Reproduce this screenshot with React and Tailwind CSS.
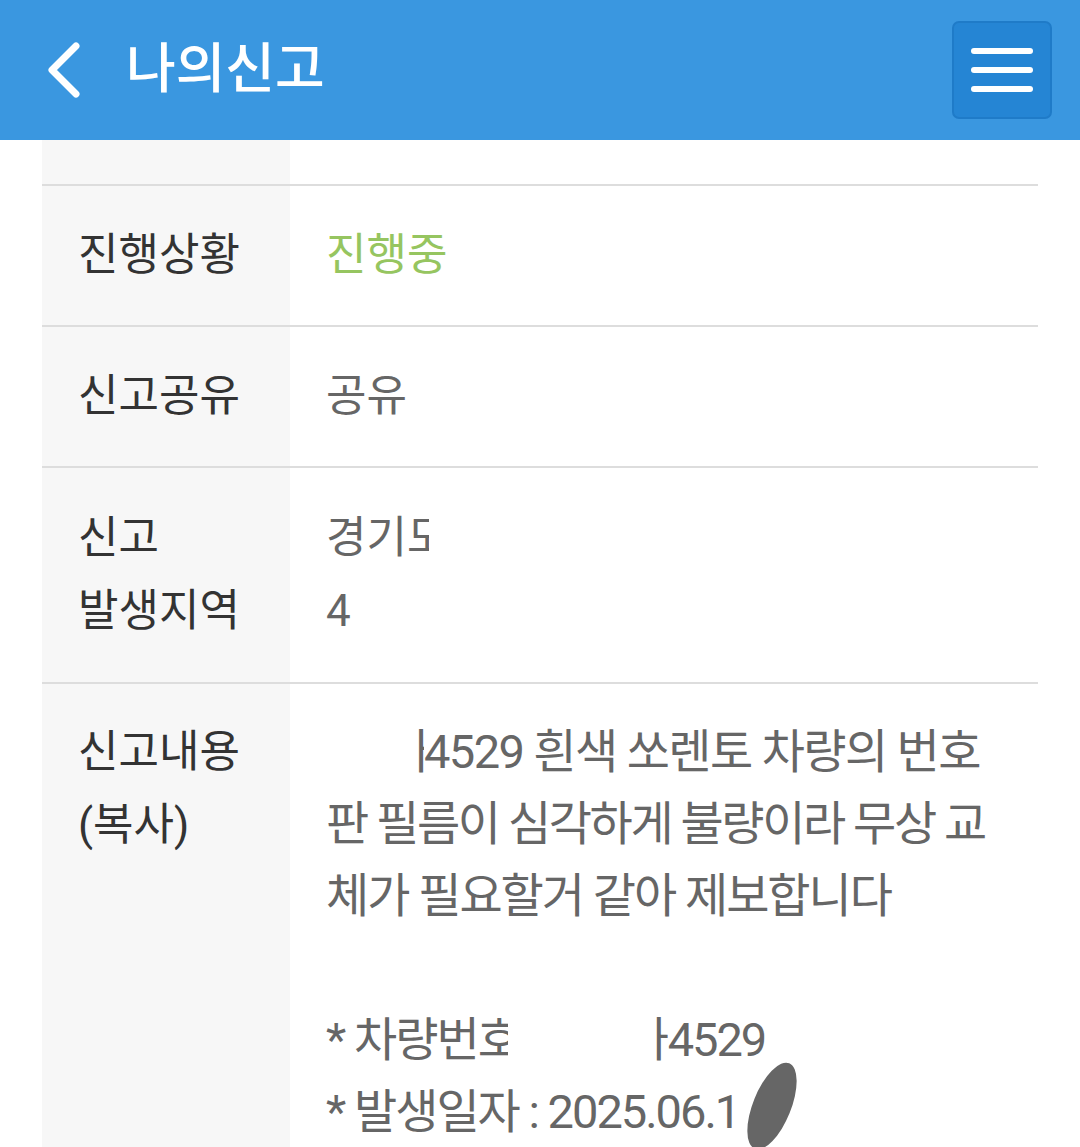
import React from "react";

const font = { fontFamily: '"Roboto", "Noto Sans CJK KR", "Noto Sans", sans-serif' };

function Row({ label, children, className = "" }) {
  return (
    <div className={`flex border-b-2 border-[#dddddd] ${className}`}>
      <div className="w-[248px] shrink-0 bg-[#f7f7f7] pl-[36px] flex flex-col justify-center text-[44px] leading-[73px] text-[#333333]">
        {label}
      </div>
      <div className="flex-1 pl-[36px] flex flex-col justify-center text-[44px] leading-[73px] text-[#666666]">
        {children}
      </div>
    </div>
  );
}

export default function App() {
  return (
    <div className="w-[1080px] h-[1147px] overflow-hidden bg-white" style={font}>
      <header className="h-[140px] bg-[#3a97e0] flex items-center justify-between pl-[44px] pr-[28px]">
        <div className="flex items-center">
          <svg width="40" height="60" viewBox="0 0 40 60" className="mr-[42px]">
            <path d="M32 6 L8 30 L32 54" fill="none" stroke="white" strokeWidth="7" strokeLinecap="round" strokeLinejoin="round" />
          </svg>
          <h1 className="text-white text-[54px] font-medium leading-none">나의신고</h1>
        </div>
        <button className="w-[100px] h-[98px] rounded-[7px] bg-[#2585d4] border-2 border-[#1f7bc8] flex flex-col items-center justify-center gap-[13px]">
          <span className="block w-[62px] h-[6px] rounded-full bg-white" />
          <span className="block w-[62px] h-[6px] rounded-full bg-white" />
          <span className="block w-[62px] h-[6px] rounded-full bg-white" />
        </button>
      </header>

      <div className="mx-[42px]">
        <Row label="" className="h-[46px]" />
        <Row label="진행상황" className="h-[141px]">
          <span className="text-[#96c560]">진행중</span>
        </Row>
        <Row label="신고공유" className="h-[141px]">
          <span>공유</span>
        </Row>
        <Row label={<><span>신고</span><span>발생지역</span></>} className="h-[216px]">
          <span className="whitespace-nowrap">
            경기
            <span className="inline-block w-[22px] overflow-hidden align-bottom">도</span>
          </span>
          <span>4</span>
        </Row>
        <div className="flex h-[520px]">
          <div className="w-[248px] shrink-0 bg-[#f7f7f7] pl-[36px] pt-[32px] text-[44px] leading-[73px] text-[#333333]">
            <div>신고내용</div>
            <div>(복사)</div>
          </div>
          <div className="flex-1 pl-[36px] pt-[32px] text-[47px] leading-[72px] text-[#666666] tracking-[-2px]">
            <div className="whitespace-nowrap tracking-[-1.6px]">
              <span className="inline-block w-[88px]" />
              <span className="inline-block w-[10px] overflow-hidden align-bottom">
                <span className="inline-block -ml-[26px]">가</span>
              </span>
              4529 흰색 쏘렌토 차량의 번호
            </div>
            <div className="whitespace-nowrap tracking-[-2.4px]">판 필름이 심각하게 불량이라 무상 교</div>
            <div className="whitespace-nowrap">체가 필요할거 같아 제보합니다</div>
            <div className="h-[72px]" />
            <div className="whitespace-nowrap">
              * 차량번
              <span className="inline-block w-[30px] overflow-hidden align-bottom">호</span>
              <span className="inline-block w-[146px]" />
              <span className="inline-block w-[14px] overflow-hidden align-bottom">
                <span className="inline-block -ml-[28px]">가</span>
              </span>
              4529
            </div>
            <div className="relative whitespace-nowrap">
              * 발생일자 : 2025.06.1
              <svg width="64" height="100" viewBox="0 0 64 100" className="absolute left-[414px] top-[-20px]">
                <ellipse cx="32" cy="50" rx="19" ry="46" transform="rotate(22 32 50)" fill="#666666" />
              </svg>
            </div>
          </div>
        </div>
      </div>
    </div>
  );
}
